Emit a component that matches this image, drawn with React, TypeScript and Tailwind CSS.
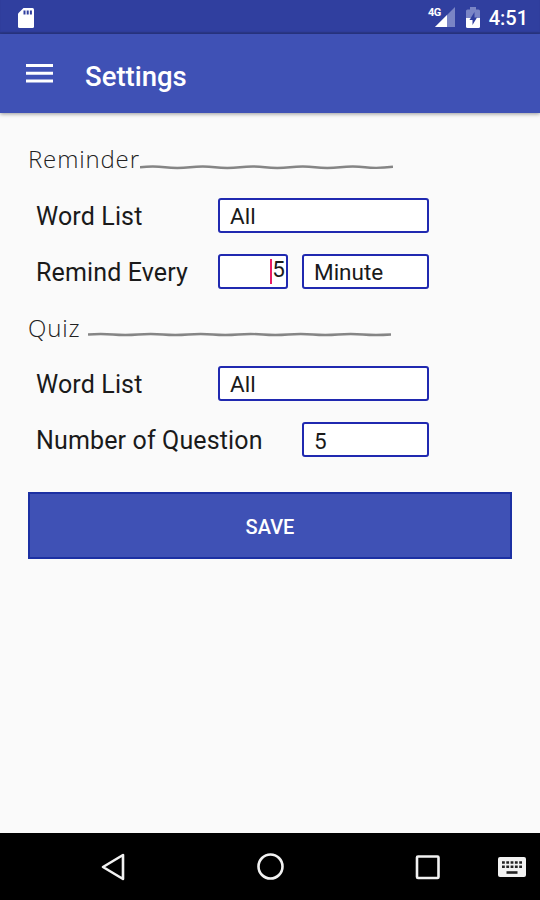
import type { ReactNode } from 'react';

function StatusBar() {
  return (
    <div className="flex h-[34px] items-center bg-[#303f9f] pl-[18px] pr-3 shadow-[inset_0_-2px_1px_#2b3889]">
      <svg width="16" height="20" viewBox="0 0 16 20" className="mt-px">
        <path d="M5.5 0H14.5Q16 0 16 1.5V18.5Q16 20 14.5 20H1.5Q0 20 0 18.5V5.5Z" fill="#fff" />
        <path d="M5.5 2.5h2v4h-2zM8.7 2.5h2v4h-2zM11.9 2.5h2v4h-2z" fill="#303f9f" />
      </svg>
      <div className="ml-auto flex items-center">
        <span className="-mr-1.5 mb-2.5 text-[11px] leading-none font-bold tracking-[-0.6px] text-white">4G</span>
        <svg width="20" height="20" viewBox="0 0 20 20">
          <path d="M20 0V20H0Z" fill="#7a85c5" />
          <path d="M12 8V20H0Z" fill="#fff" />
        </svg>
        <svg width="14" height="21" viewBox="0 0 14 21" className="ml-[11px]">
          <path d="M4 0h6v2.5h2.5Q14 2.5 14 4v7H0V4Q0 2.5 1.5 2.5H4Z" fill="#7a85c5" />
          <path d="M0 11h14v8.5Q14 21 12.5 21h-11Q0 21 0 19.5Z" fill="#fff" />
          <path d="M8.5 5 3.5 13H6.5V18L11 10.5H8.5Z" fill="#303f9f" />
        </svg>
        <span className="ml-[9px] mt-0.5 text-[20px] leading-none font-medium text-white">4:51</span>
      </div>
    </div>
  );
}

function AppBar() {
  return (
    <header className="flex h-[79px] items-center bg-[#3f51b5] pl-[26px] shadow-[0_1px_4px_rgba(0,0,0,0.4)]">
      <svg width="27" height="21" viewBox="0 0 27 21">
        <path d="M0 2.500h27M0 10.300h27M0 18h27" stroke="#fff" strokeWidth="3" />
      </svg>
      <h1 className="ml-8 pt-1.5 text-[27.5px] leading-none font-medium text-white">Settings</h1>
    </header>
  );
}

function SectionTitle({ children, rule }: { children: ReactNode; rule: ReactNode }) {
  return (
    <div className="flex h-14 items-center">
      <h2 className="font-['Open_Sans',sans-serif] text-[24px] leading-none font-light text-[#222]">{children}</h2>
      {rule}
    </div>
  );
}

function Row({ label, children }: { label: string; children: ReactNode }) {
  return (
    <div className="flex h-[56.25px] w-[401px] items-center justify-between pl-2">
      <span className="pt-0.5 text-[25px] leading-none tracking-[0.14px] whitespace-nowrap text-[#1a1a1a]">{label}</span>
      <div className="flex gap-[14px]">{children}</div>
    </div>
  );
}

function Field({ className, children }: { className: string; children: ReactNode }) {
  return (
    <div className={`flex h-[35px] items-center rounded-[3px] border-2 border-[#2029b0] bg-white pt-0.5 text-[22.5px] leading-none text-[#1a1a1a] ${className}`}>
      {children}
    </div>
  );
}

function NavBar() {
  return (
    <nav className="mt-auto h-[67px] bg-black">
      <svg width="540" height="67" viewBox="0 0 540 67" fill="none" stroke="#f2f2f2" strokeWidth="2.6">
        <path d="M123 22V46L103 34Z" strokeLinejoin="round" />
        <circle cx="270.5" cy="33.5" r="12" />
        <rect x="417" y="23.5" width="21.5" height="21.5" rx="1" />
        <rect x="498" y="24" width="28" height="20" rx="2" fill="#f2f2f2" stroke="none" />
        <path d="M502 29.5h20M502 33.8h20" stroke="#222" strokeWidth="2.4" strokeDasharray="2.8 1.5" />
        <path d="M506.500 39.500h11" stroke="#222" strokeWidth="2.6" />
      </svg>
    </nav>
  );
}

export default function App() {
  return (
    <div className="flex h-[900px] w-[540px] flex-col overflow-hidden bg-[#fafafa] font-[Roboto,sans-serif]">
      <StatusBar />
      <AppBar />
      <main className="px-7 pt-[18px]">
        <SectionTitle
          rule={
            <svg width="253" height="6" viewBox="0 0 253 6" className="mt-[15px]" fill="none" stroke="#858585">
              <path d="M0 3.200q13-1.500 25 0t25 0 25 0 25 0 25 0 25 0 25 0 25 0 25 0 28-.5" strokeWidth="2.400" />
            </svg>
          }
        >
          <span className="block w-[112px] tracking-[0.85px]">Reminder</span>
        </SectionTitle>
        <Row label="Word List">
          <Field className="w-[211px] pl-[10px]">All</Field>
        </Row>
        <Row label="Remind Every">
          <Field className="w-[70px] justify-end pr-[1px]">
            <span className="-mt-0.5 h-[25px] w-[2px] bg-[#e91e63]" />
            <span className="-mt-1.5">5</span>
          </Field>
          <Field className="w-[127px] pl-[10px]">Minute</Field>
        </Row>
        <SectionTitle
          rule={
            <svg width="303" height="6" viewBox="0 0 303 6" className="mt-[15px]" fill="none" stroke="#858585">
              <path d="M0 2.500q13-1 25 0t25 0 25 0 25 0 25 0 25 0 25 0 25 0 25 0 25 0 25 0 28 0" strokeWidth="2.400" />
            </svg>
          }
        >
          <span className="block w-[60px] tracking-[0.85px]">Quiz</span>
        </SectionTitle>
        <Row label="Word List">
          <Field className="w-[211px] pl-[10px]">All</Field>
        </Row>
        <Row label="Number of Question">
          <Field className="w-[127px] pl-[10px]">5</Field>
        </Row>
        <button className="mt-6 flex h-[67px] w-full items-center justify-center border-2 border-[#1c30a3] bg-[#3f51b5] pt-[3px] text-[20px] leading-none font-medium text-white">
          SAVE
        </button>
      </main>
      <NavBar />
    </div>
  );
}
